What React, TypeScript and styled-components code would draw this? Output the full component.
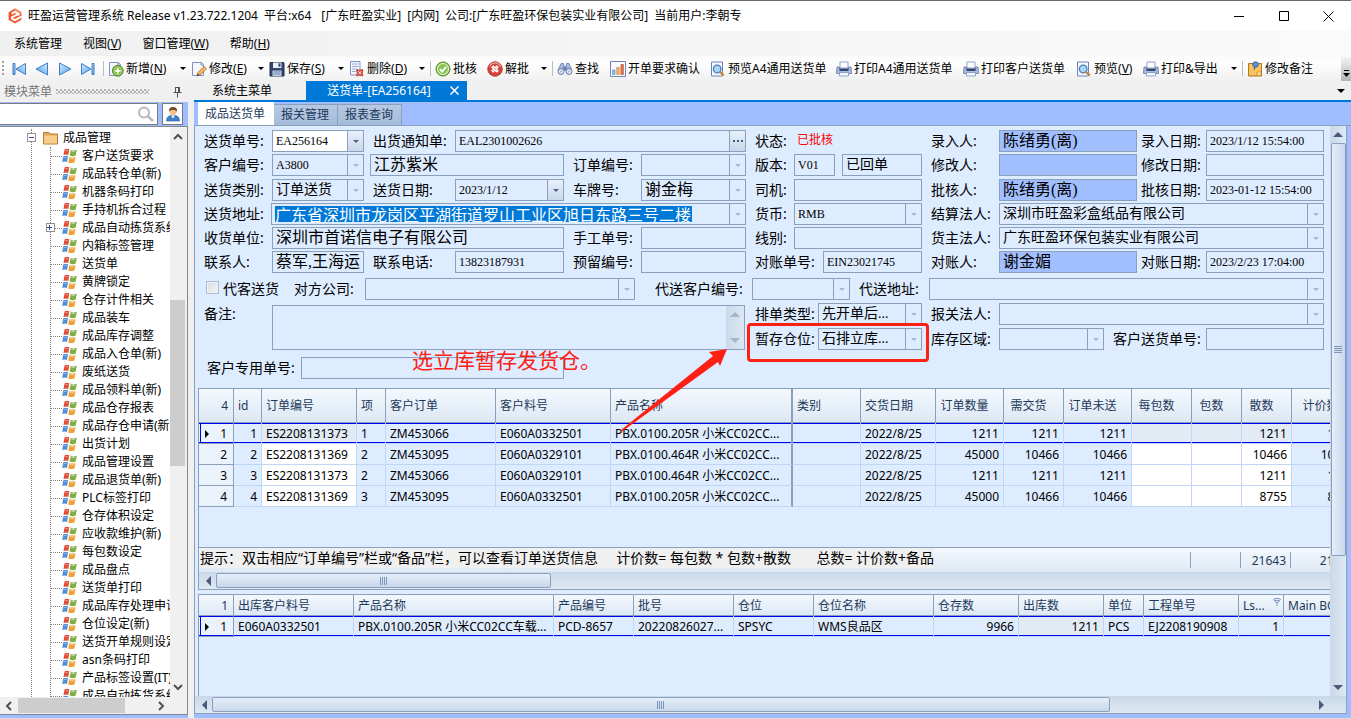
import React from "react";
import styled, { createGlobalStyle, css } from "styled-components";

const UI = `"Noto Sans", "Noto Sans CJK SC", sans-serif`;
const SERIF = `"Liberation Serif", "Noto Sans CJK SC", serif`;
const C = {
  accent: "#0078d7",
  frame: "#a0bdff",
  panel: "#deecff",
  line: "#8ba0bc",
  grid: "#c0d6f5",
  head: "#1e395b",
};

const Global = createGlobalStyle`
  * { box-sizing: border-box; }
  html, body, #root { height: 100%; }
  body { margin: 0; font: 12px/18px ${UI}; color: #000; background: #f0f0f0; overflow: hidden; }
  button, input, select, textarea { font: inherit; color: inherit; margin: 0; border-radius: 0; }
  button { background: none; border: 0; padding: 0; }
  ul { list-style: none; margin: 0; padding: 0; }
  svg { display: block; flex: none; }
`;

/* ---------- window chrome ---------- */

const Window = styled.div`
  display: flex;
  flex-direction: column;
  height: 100vh;
  border-bottom: 1px solid #dcdcdc;
`;

const TitleBar = styled.header`
  display: flex;
  align-items: center;
  flex: none;
  height: 31px;
  padding-left: 7px;
  background: #fff;
  border-top: 1px solid #6a6868;
`;

const TitleText = styled.h1`
  display: flex;
  gap: 6px;
  flex: 1;
  margin: 0 0 0 5px;
  font-size: 12px;
  font-weight: 400;
  white-space: nowrap;
  span:nth-child(2) { margin-right: 4px; }
`;

const CaptionButton = styled.button`
  display: grid;
  place-items: center;
  width: 45px;
  height: 30px;
`;

const MenuBar = styled.nav`
  display: flex;
  align-items: center;
  flex: none;
  gap: 21px;
  height: 25px;
  padding: 1px 0 0 14px;
  background: linear-gradient(90deg, #f0f0f0, #fafafa);
`;

const ToolBar = styled.div`
  display: flex;
  align-items: center;
  flex: none;
  height: 25px;
  padding-left: 2px;
  overflow: hidden;
  background: linear-gradient(#fafafa, #fefefe 30%, #f0f0f0);
`;

const Grip = styled.span`
  width: 5px;
  height: 16px;
  background: radial-gradient(circle at 1px 1px, #a0a0a0 1px, transparent 1px) 0 0 / 4px 4px repeat-y;
`;

const NavGroup = styled.div`
  display: flex;
  flex: none;
  margin-right: 4px;
`;

const NavButton = styled.button`
  display: grid;
  place-items: center;
  flex: none;
  width: 23px;
  height: 24px;
`;

const ToolSep = styled.span`
  flex: none;
  width: 1px;
  height: 15px;
  margin: 0 4px 0 0;
  background: #bdbdbd;
`;

const ToolButton = styled.button<{ $w: number }>`
  display: flex;
  align-items: center;
  gap: 2px;
  flex: none;
  width: ${(p) => p.$w}px;
  height: 24px;
  white-space: nowrap;
`;

const DropArrow = styled.i`
  width: 0;
  border: 3px solid transparent;
  border-top: 3px solid #000;
  border-bottom: 0;
  margin: 0 5px 0 auto;
`;

const Overflow = styled.button`
  display: flex;
  align-items: flex-end;
  justify-content: center;
  flex: none;
  width: 10px;
  height: 24px;
  margin-left: auto;
  padding-bottom: 3px;
  background: linear-gradient(#f4f4f4, #b4b4b4);
`;

const Body = styled.div`
  display: flex;
  flex: 1;
  min-height: 0;
  gap: 6px;
`;

/* ---------- sidebar ---------- */

const Sidebar = styled.aside`
  display: flex;
  flex-direction: column;
  flex: none;
  width: 188px;
  padding-bottom: 3px;
  background: ${C.frame};
`;

const SideTitle = styled.div`
  display: flex;
  align-items: center;
  height: 21px;
  padding: 0 6px 0 4px;
  color: #777;
  background: #f0f0f0;
`;

const SideDots = styled.span`
  flex: 1;
  height: 5px;
  margin: 0 24px 0 4px;
  background:
    radial-gradient(circle at 1px 1px, #b0b0b0 1px, transparent 1px) 0 0 / 4px 4px,
    radial-gradient(circle at 1px 1px, #b0b0b0 1px, transparent 1px) 2px 2px / 4px 4px;
`;

const SearchRow = styled.div`
  display: flex;
  align-items: center;
  gap: 4px;
  height: 24px;
`;

const SearchBox = styled.label`
  display: flex;
  align-items: center;
  width: 158px;
  height: 22px;
  padding-right: 3px;
  background: #fff;
  border: 1px solid #7a7a7a;
  border-left: 0;
  input { flex: 1; min-width: 0; border: 0; outline: 0; background: none; }
`;

const UserButton = styled.button`
  display: grid;
  place-items: center;
  width: 21px;
  height: 22px;
  background: #fff;
  border: 1px solid #7a7a7a;
`;

const TreeBox = styled.div`
  display: flex;
  flex-direction: column;
  flex: 1;
  min-height: 0;
  background: #fff;
  border: 1px solid #828790;
  border-left: 0;
`;

const TreeArea = styled.div`
  display: flex;
  flex: 1;
  min-height: 0;
`;

const Tree = styled.ul`
  flex: 1;
  min-width: 0;
  overflow: hidden;
  padding-top: 2px;
  white-space: nowrap;
`;

const TreeRoot = styled.li`
  position: relative;
  margin-left: 31px;
  border-left: 1px dotted #808080;
`;

const RootLabel = styled.div`
  display: flex;
  align-items: center;
  height: 18px;
  gap: 4px;
  padding-left: 11px;
`;

const Branch = styled.ul`
  margin-left: 18px;
  border-left: 1px dotted #808080;
`;

const Leaf = styled.li`
  position: relative;
  display: flex;
  align-items: center;
  height: 18px;
  &::before { content: ""; flex: none; width: 11px; border-top: 1px dotted #808080; }
  svg { margin-right: 4px; }
`;

const Expander = styled.button`
  position: absolute;
  top: 4px;
  left: -5px;
  display: grid;
  place-items: center;
  width: 9px;
  height: 9px;
  background: #fff;
  border: 1px solid #919191;
`;

const WinScrollV = styled.div`
  display: flex;
  flex-direction: column;
  justify-content: space-between;
  align-items: center;
  flex: none;
  width: 17px;
  padding: 5px 2px 5px 0;
  background: #f0f0f0;
`;

const WinThumbV = styled.div`
  width: 15px;
  height: 166px;
  margin-top: 158px;
  margin-bottom: auto;
  background: #cdcdcd;
`;

const WinScrollH = styled.div`
  display: flex;
  align-items: center;
  justify-content: space-between;
  flex: none;
  height: 17px;
  padding: 0 21px 0 4px;
  background: #f0f0f0;
`;

const WinThumbH = styled.div`
  width: 107px;
  height: 15px;
  margin: 0 auto 0 4px;
  background: #cdcdcd;
`;

/* ---------- document area ---------- */

const Main = styled.main`
  display: flex;
  flex-direction: column;
  flex: 1;
  min-width: 0;
`;

const DocTabs = styled.div`
  display: flex;
  flex: none;
  height: 21px;
  padding-right: 6px;
  border-bottom: 2px solid ${C.accent};
`;

const DocTab = styled.button<{ $active?: boolean; $w: number }>`
  display: flex;
  align-items: center;
  justify-content: center;
  gap: 19px;
  width: ${(p) => p.$w}px;
  padding-right: ${(p) => (p.$active ? 0 : 16)}px;
  ${(p) => p.$active && css`padding-left: 13px; color: #fff; background: ${C.accent};`}
`;

const TabMenuButton = styled.button`
  display: grid;
  place-items: center;
  margin-left: auto;
`;

const PageTabs = styled.div`
  display: flex;
  align-items: flex-end;
  flex: none;
  height: 24px;
  padding-left: 4px;
  background: ${C.frame};
  border-bottom: 1px solid ${C.line};
`;

const PageTab = styled.button<{ $active?: boolean }>`
  height: 21px;
  padding: 0 8px 0 7px;
  color: ${C.head};
  background: linear-gradient(#b7c9e2, #a3bad9);
  border: 1px solid ${C.line};
  border-width: 1px 1px 0 0;
  ${(p) => p.$active && css`height: 23px; background: #fff; border-color: #fff;`}
`;

const Frame = styled.div`
  display: flex;
  flex-direction: column;
  flex: 1;
  min-height: 0;
  padding: 0 4px 4px 0;
  background: ${C.frame};
`;

const Page = styled.div`
  display: flex;
  flex-direction: column;
  flex: 1;
  min-height: 0;
  background: ${C.panel};
  border: 1px solid ${C.line};
  border-top: 0;
`;

const PageRow = styled.div`
  display: flex;
  flex: 1;
  min-height: 0;
`;

const Content = styled.div`
  display: flex;
  flex-direction: column;
  flex: 1;
  min-width: 0;
`;

const ScrollV = styled.div`
  display: flex;
  flex-direction: column;
  align-items: center;
  justify-content: space-between;
  flex: none;
  width: 16px;
  padding: 6px 0;
  background: linear-gradient(90deg, #c9d9e9, #dfe8f3);
`;

const ThumbV = styled.div`
  display: grid;
  place-items: center;
  width: 15px;
  height: 413px;
  margin: 6px 0 auto;
  background: linear-gradient(90deg, #e5eefa, #c8d7ea);
  border: 1px solid ${C.line};
  border-radius: 2px;
`;

const ScrollH = styled.div`
  display: flex;
  align-items: center;
  flex: none;
  height: 17px;
  padding-left: 7px;
  background: linear-gradient(#c9d9e9, #dfe8f3);
`;

const PageScroll = styled(ScrollH)`
  padding-right: 22px;
`;

const ThumbH = styled.div<{ $w: string }>`
  display: grid;
  place-items: center;
  width: ${(p) => p.$w};
  height: 15px;
  margin: 0 auto 0 5px;
  background: linear-gradient(#e5eefa, #c8d7ea);
  border: 1px solid ${C.line};
  border-radius: 2px;
`;

const Arrow = styled.i<{ $dir: "up" | "down" | "left" | "right"; $c?: string; $s?: number }>`
  flex: none;
  width: 0;
  height: 0;
  border: ${(p) => p.$s ?? 5}px solid transparent;
  ${(p) => p.$dir === "up" && css`border-top: 0; border-bottom-color: ${p.$c ?? "#4a5b7d"};`}
  ${(p) => p.$dir === "down" && css`border-bottom: 0; border-top-color: ${p.$c ?? "#4a5b7d"};`}
  ${(p) => p.$dir === "left" && css`border-left: 0; border-right-color: ${p.$c ?? "#4a5b7d"};`}
  ${(p) => p.$dir === "right" && css`border-right: 0; border-left-color: ${p.$c ?? "#4a5b7d"};`}
`;

/* ---------- form ---------- */

const Form = styled.form`
  position: relative;
  flex: none;
  padding: 4px 6px 9px 0;
`;

const Group = styled.div<{ $top?: number }>`
  display: flex;
  flex-direction: column;
  gap: 2px;
  margin-top: ${(p) => p.$top ?? 0}px;
`;

const Row = styled.div`
  display: flex;
  align-items: flex-start;
`;

const Label = styled.label<{ $w: number; $pad?: number }>`
  flex: none;
  width: ${(p) => p.$w}px;
  padding-left: ${(p) => p.$pad ?? 9}px;
  font-size: 14px;
  line-height: 22px;
  white-space: nowrap;
`;

type Face = "serif" | "wide" | "cjk";
const faces = {
  serif: css`font: 12px/20px ${SERIF};`,
  wide: css`font: 16px/20px ${SERIF};`,
  cjk: css`font: 14px/20px ${SERIF};`,
};

const Box = styled.div<{ $w?: number; $blue?: boolean; $white?: boolean; $gap?: number; $face: Face }>`
  display: flex;
  align-items: center;
  ${(p) => (p.$w ? css`flex: none; width: ${p.$w}px;` : css`flex: 1; min-width: 0;`)}
  height: 22px;
  margin-left: ${(p) => p.$gap ?? 0}px;
  background: ${(p) => (p.$blue ? "#a1beff" : p.$white ? "#fff" : "transparent")};
  border: 1px solid ${C.line};
  input, select {
    flex: 1;
    min-width: 0;
    height: 20px;
    padding: 0 3px;
    border: 0;
    outline: 0;
    appearance: none;
    background: none;
    ${(p) => faces[p.$face]}
  }
`;

const BoxButton = styled.button<{ $on?: boolean }>`
  display: grid;
  place-items: center;
  flex: none;
  width: 16px;
  height: 20px;
  margin-left: auto;
  border-left: 1px solid ${C.line};
  background: ${(p) => (p.$on ? "linear-gradient(#e8f0fa, #c8d8ea)" : "transparent")};
`;

const SelectedText = styled.input`
  && {
    flex: none;
    width: 417px;
    height: 16px;
    margin-left: 3px;
    padding: 0;
    line-height: 16px;
    color: #fff;
    background: ${C.accent};
  }
`;

const Status = styled.output`
  flex: none;
  width: 128px;
  padding-left: 3px;
  line-height: 20px;
  color: #f00;
`;

const CheckLabel = styled.label`
  display: flex;
  align-items: center;
  gap: 4px;
  flex: none;
  width: 90px;
  height: 22px;
  padding-left: 11px;
  font-size: 14px;
  white-space: nowrap;
  input {
    flex: none;
    appearance: none;
    width: 13px;
    height: 13px;
    margin-bottom: 4px;
    background: linear-gradient(135deg, #d9dde3, #f4f4f2);
    border: 1px solid #a9bdd8;
    box-shadow: inset 0 0 0 1px #eef3fa;
  }
`;

const NoteBox = styled.div`
  display: flex;
  flex: none;
  width: 473px;
  height: 45px;
  margin: 2px 1px 0 0;
  border: 1px solid ${C.line};
  textarea {
    flex: 1;
    resize: none;
    border: 0;
    outline: 0;
    background: none;
  }
`;

const NoteScroll = styled.div`
  display: flex;
  flex-direction: column;
  align-items: center;
  justify-content: space-between;
  width: 18px;
  padding: 6px 0;
  background: linear-gradient(90deg, #cbdaea, #dce7f3);
`;

const NoteRow = styled.div`
  display: flex;
  margin-top: 3px;
`;

const NoteSide = styled.div`
  display: flex;
  flex-direction: column;
  gap: 3px;
  flex: 1;
  min-width: 0;
`;

const CustomerRow = styled(Row)`
  margin-top: 7px;
  padding-left: 3px;
`;

const Callout = styled.div`
  position: absolute;
  left: 552px;
  top: 197px;
  width: 182px;
  height: 39px;
  border: 3px solid #fe2015;
  border-radius: 4px;
  pointer-events: none;
`;

const CalloutText = styled.p`
  position: absolute;
  left: 217px;
  top: 220px;
  margin: 0;
  font: 21px/26px "Noto Sans CJK SC", sans-serif;
  color: #fe2015;
  white-space: nowrap;
  pointer-events: none;
`;

const CalloutArrow = styled.svg`
  position: absolute;
  z-index: 1;
  left: 425px;
  top: 222px;
  pointer-events: none;
`;

/* ---------- grids ---------- */

const GridPane = styled.section<{ $fill?: boolean }>`
  display: flex;
  flex-direction: column;
  ${(p) => (p.$fill ? css`flex: 1; min-height: 0; margin-top: 4px;` : css`flex: none; border-bottom: 1px solid ${C.line};`)}
  margin-left: 3px;
  border-top: 1px solid ${C.line};
  border-left: 1px solid ${C.line};
  overflow: hidden;
`;

const TableArea = styled.div`
  min-height: 158px;
`;

const Table = styled.table<{ $headH: number }>`
  table-layout: fixed;
  width: 1px;
  border-collapse: separate;
  border-spacing: 0;
  font-size: 12px;
  line-height: 18px;
  th {
    height: ${(p) => p.$headH}px;
    padding: 1px 4px 0;
    font-weight: 400;
    text-align: left;
    white-space: nowrap;
    color: ${C.head};
    background: linear-gradient(#f3f8fd, #dde8f4);
    border-right: 1px solid ${C.line};
    border-bottom: 1px solid ${C.line};
  }
`;

const HeadCell = styled.th<{ $center?: boolean; $right?: boolean; $thick?: boolean }>`
  ${(p) => p.$center && css`&& { padding-right: 14px; text-align: center; }`}
  ${(p) => p.$right && css`&& { padding-right: 5px; text-align: right; }`}
  ${(p) => p.$thick && css`&& { border-right-width: 2px; }`}
`;

const Cell = styled.td<{ $num?: boolean; $bg?: string; $thick?: boolean; $current?: boolean }>`
  height: 21px;
  padding: 2px 4px 0;
  overflow: hidden;
  white-space: nowrap;
  text-align: ${(p) => (p.$num ? "right" : "left")};
  background: ${(p) => p.$bg ?? "transparent"};
  border-right: ${(p) => (p.$thick ? `2px solid ${C.line}` : `1px solid ${C.grid}`)};
  border-bottom: 1px solid ${C.grid};
  ${(p) => p.$current && css`box-shadow: inset 0 1px #0000f0, inset 0 -1px #0000f0;`}
`;

const Indicator = styled.td<{ $current?: boolean }>`
  height: 21px;
  padding: 2px 6px 0 0;
  text-align: right;
  background: #eaf2fb;
  border-right: 1px solid ${C.line};
  border-bottom: 1px solid ${C.line};
  ${(p) => p.$current && css`
    background: linear-gradient(#0000f0, #0000f0) 1px 0 / 1px 100% no-repeat, #eaf2fb;
    box-shadow: inset 0 1px #0000f0, inset 0 -1px #0000f0;
  `}
  div { display: flex; align-items: center; justify-content: flex-end; }
  i { margin: 0 auto 0 6px; border-left-color: #000; }
`;

const Summary = styled.div`
  display: flex;
  flex: none;
  height: 25px;
  border-top: 1px solid ${C.line};
  background: linear-gradient(#f3f8fd, #dfe9f5);
  color: ${C.head};
`;

const Hint = styled.div`
  flex: none;
  width: 991px;
  padding-left: 1px;
  span {
    display: inline-block;
    font-size: 14px;
    line-height: 20px;
    white-space: pre;
    color: #000;
    background: #f0f0f0;
  }
`;

const Sum = styled.div<{ $w: number }>`
  flex: none;
  width: ${(p) => p.$w}px;
  height: 16px;
  margin-top: 4px;
  padding-right: 4px;
  line-height: 18px;
  text-align: right;
  border-left: 1px solid ${C.line};
`;

const FilterHead = styled.span`
  display: flex;
  justify-content: space-between;
  align-items: center;
  svg { margin: -8px -2px 0 0; }
`;

/* ---------- icons ---------- */

const I = ({ children, s = 16 }: { children: React.ReactNode; s?: number }) => (
  <svg width={s} height={s} viewBox="0 0 16 16" aria-hidden="true">{children}</svg>
);

const Logo = () => (
  <I>
    <path d="M8 .6 14.4 4.2V11.8L8 15.4 1.6 11.8V4.2Z" fill="#f2552c" />
    <path d="M14.4 4.2 8 .6 6 1.7l5.4 3.1z" fill="#ff8a5c" />
    <path d="M4.6 5.6 8 3.8l3.6 2L5 9.4v1.2l3 1.6 6.400-3.500" fill="none" stroke="#fff" strokeWidth="1.9" />
    <path d="M11.6 5.800v2" stroke="#fff" strokeWidth="1.4" />
  </I>
);

const Nav = ({ flip, bar }: { flip?: boolean; bar?: boolean }) => (
  <svg width="16" height="16" viewBox="0 0 16 16" aria-hidden="true">
    <defs>
      <linearGradient id="navfill" x1="0" y1="0" x2="1" y2="1">
        <stop offset="0" stopColor="#d5ecff" />
        <stop offset="1" stopColor="#4f9be6" />
      </linearGradient>
    </defs>
    <g transform={flip ? "matrix(-1 0 0 1 16 0)" : undefined} fill="url(#navfill)" stroke="#3d7fc6" strokeWidth="1">
      <path d={bar ? "M1.5 2.5v11l9.5-5.500z" : "M2.500 2v12L14 8z"} />
      {bar && <path d="M12 2.500h2v11h-2z" />}
    </g>
  </svg>
);

const Sheet = () => (
  <>
    <path d="M1.500 1.500h9l2 2v11h-11z" fill="#f4f8fe" stroke="#7f93c0" />
    <path d="M10 1.500V4h2.500" fill="none" stroke="#7f93c0" />
  </>
);

const AddIcon = () => (
  <I>
    <Sheet />
    <circle cx="9.800" cy="9.800" r="5.400" fill="#79b23c" stroke="#4f8a22" />
    <circle cx="9.800" cy="9.800" r="4" fill="none" stroke="#c3e39b" strokeWidth=".8" />
    <path d="M9.800 7v5.600M7 9.800h5.600" stroke="#fff" strokeWidth="1.800" />
  </I>
);
const EditIcon = () => (
  <I>
    <Sheet />
    <path d="m6 15 1-3.600 6-6 2.500 2.400-6 6z" fill="#f4b860" stroke="#a8672a" strokeWidth=".8" />
    <path d="m6 15 .7-2.600 2 1.900z" fill="#444" />
  </I>
);
const SaveIcon = () => (
  <I>
    <path d="M1 1.500h13.500l.5.500v13H1z" fill="#33456b" stroke="#1f2d4b" />
    <path d="M4 1.500h8.500V7H4z" fill="#e9f0fa" />
    <path d="M9.500 2.300h2v3.400h-2z" fill="#33456b" />
    <path d="M3.500 9.500h9V15h-9z" fill="#c3d2ea" />
    <path d="M4.500 11h7M4.500 13h7" stroke="#6c82ae" />
  </I>
);
const DeleteIcon = () => (
  <I>
    <path d="M1.500.5h9.500v13.500H1.500z" fill="#f4f7fd" stroke="#7f93c8" />
    <path d="M3 3h6.500M3 5.500h6.500M3 8h5M3 10.500h4" stroke="#93a6d8" />
    <path d="M7.500 8.500h6.500v6.500H7.500z" fill="#e0685c" />
    <path d="m7.800 8.800 6 6m0-6-6 6" stroke="#c8352b" strokeWidth="2" />
    <path d="m9 10 3.600 3.600m0-3.600L9 13.600" stroke="#fff" strokeWidth=".9" />
  </I>
);
const ApproveIcon = () => (
  <I>
    <circle cx="8" cy="8" r="7" fill="#6fb536" stroke="#5a8f35" />
    <circle cx="8" cy="8" r="5.500" fill="#86c44e" stroke="#e3f2d0" strokeWidth="1.200" />
    <path d="m5 8.200 2.200 2.400 3.800-4.800" fill="none" stroke="#fff" strokeWidth="1.900" />
  </I>
);
const RejectIcon = () => (
  <I>
    <circle cx="8" cy="8" r="7.200" fill="#d6453d" stroke="#b33029" />
    <path d="M2.500 5.500a6 6 0 0 1 11 0" fill="none" stroke="#f0a49a" strokeWidth="1.400" />
    <path d="m5.200 5.200 5.600 5.600m0-5.600-5.600 5.600" stroke="#fff" strokeWidth="3" />
    <path d="m6 6 4 4m0-4-4 4" stroke="#e9b4af" strokeWidth=".9" />
  </I>
);
const FindIcon = () => (
  <I>
    <path d="M4 2.500h2.500l1 7H1zM12 2.500H9.500l-1 7H15z" fill="#a9bcdb" stroke="#5f7aa8" strokeWidth=".8" />
    <path d="M6.500 5.500h3v3h-3z" fill="#5f7aa8" />
    <circle cx="4" cy="10.500" r="3" fill="#e2ebf8" stroke="#5f7aa8" />
    <circle cx="12" cy="10.500" r="3" fill="#e2ebf8" stroke="#5f7aa8" />
    <path d="M2.800 11.500 5 9.500M10.800 11.500l2.200-2" stroke="#5f7aa8" strokeWidth=".8" />
  </I>
);
const ChartIcon = () => (
  <I>
    <path d="M.5.500h15v15H.5z" fill="#f8fbff" stroke="#6f86b4" />
    <path d="M2.500 9h2.500v4.500H2.500z" fill="#8dbdf0" stroke="#4f86c6" strokeWidth=".6" />
    <path d="M6.700 6.500h2.500v7H6.700z" fill="#f7b563" stroke="#cf7f28" strokeWidth=".6" />
    <path d="M10.900 3.500h2.500v10h-2.500z" fill="#e27a55" stroke="#b94627" strokeWidth=".6" />
  </I>
);
const PreviewIcon = () => (
  <I>
    <path d="M1.500 1h11v14h-11z" fill="#f6f9ff" stroke="#6b83b8" />
    <circle cx="7.200" cy="8" r="3.800" fill="#a9d5f6" stroke="#4c7db8" strokeWidth="1.300" />
    <path d="m10 11 3.800 3.500" stroke="#c6803a" strokeWidth="2.200" />
  </I>
);
const PrintIcon = () => (
  <I>
    <path d="M4 1h8v6H4z" fill="#fff" stroke="#8fa2cb" />
    <path d="M1 6h2.500v2.500h9V6H15l.5 6.500H.5z" fill="#a9bbde" stroke="#6277a8" strokeWidth=".8" />
    <path d="M3.500 7.500h9v2.500h-9z" fill="#34456f" />
    <path d="M3.500 11.500h9V15h-9z" fill="#f3f7ff" stroke="#7d92c2" strokeWidth=".8" />
  </I>
);
const NoteIcon = () => (
  <I>
    <path d="M1.500 2.500h13v12.500h-13z" fill="#f9c45e" stroke="#b8741c" />
    <path d="M10 15v-4h4.500" fill="#fde6b0" stroke="#b8741c" strokeWidth=".7" />
    <circle cx="8.500" cy="3.500" r="2.800" fill="#5b8fd6" stroke="#2f5a9a" strokeWidth=".8" />
    <path d="m8 6-1 3" stroke="#2f5a9a" />
  </I>
);
const ModuleIcon = () => (
  <I>
    <path d="M2.600 1.200Q4.800.2 7.300 1.300L6.300 7.100Q4 6.100 1.500 7.100z" fill="#df4f37" />
    <path d="M8.700 1.900Q11.500 3 14.900 1.800L13.700 7.600Q10.800 8.700 7.600 7.600z" fill="#7fae45" />
    <path d="M1.300 8.300Q3.700 7.300 6.100 8.300L5 14Q2.700 13 .2 14z" fill="#4f8fd8" />
    <path d="M7.400 8.900Q10.300 10 13.500 8.900L12.400 14.500Q9.400 15.600 6.300 14.400z" fill="#f0a136" />
    <path d="M3.600 2.500 6 2.800M9.500 3.600l3.500-.1M2.400 9.500l2.400.2M8.300 10.500l3.600-.1" stroke="#fff" strokeOpacity=".45" />
  </I>
);
const FolderIcon = () => (
  <I>
    <path d="M.5 2.500h5.500l1.500 1.500h7v10H.5z" fill="#e2a85a" stroke="#b87b34" />
    <path d="M1 5.500h13v8H1z" fill="#f6cd8a" />
  </I>
);
const UserIcon = () => (
  <I>
    <path d="M1.500 15q0-5 4.500-5.500h4q4.500.5 4.500 5.500z" fill="#3f7fca" stroke="#2a5c9d" strokeWidth=".6" />
    <path d="m6 9.500 2 3 2-3z" fill="#fff" />
    <circle cx="8" cy="5.500" r="3.600" fill="#f3c08c" />
    <path d="M4 5.500Q3.500 1 8 1t4 4.500Q10.500 3.500 8 4 5.500 3.500 4 5.500" fill="#7a4a22" />
  </I>
);
const Magnifier = () => (
  <svg width="17" height="17" viewBox="0 0 17 17" fill="none" stroke="#b9b9b9" aria-hidden="true">
    <circle cx="7" cy="6.500" r="5" strokeWidth="2" />
    <path d="m10.500 10 5.500 5" strokeWidth="2.600" />
  </svg>
);
const Pin = () => (
  <svg width="9" height="12" viewBox="0 0 9 12" fill="none" stroke="#555" aria-hidden="true">
    <path d="M2.500 1v5.500M2.500 1.500h4M5.500 1v5.500M6.500 1v5.500M.5 6.500h8M4.500 7v4.500" />
  </svg>
);
const Chevron = ({ d }: { d: string }) => (
  <svg width="10" height="10" viewBox="0 0 10 10" fill="none" stroke="#505050" strokeWidth="2" aria-hidden="true">
    <path d={d} />
  </svg>
);
const Ridges = ({ vertical }: { vertical?: boolean }) => (
  <svg width="8" height="8" viewBox="0 0 8 8" stroke="#7d97ba" aria-hidden="true">
    <path d={vertical ? "M0 .5h8M0 2.500h8M0 4.500h8M0 6.500h8" : "M.5 0v8M2.500 0v8M4.500 0v8M6.500 0v8"} />
  </svg>
);

/* ---------- form pieces ---------- */

type FieldProps = {
  id: string;
  label?: string;
  lw?: number;
  pad?: number;
  w?: number;
  value?: string;
  face?: Face;
  blue?: boolean;
  white?: boolean;
  gap?: number;
};

const Text = ({ id, label, lw = 77, pad, w, value = "", face = "serif", blue, gap, more }: FieldProps & { more?: boolean }) => (
  <>
    {label && <Label htmlFor={id} $w={lw} $pad={pad}>{label}:</Label>}
    <Box $w={w} $blue={blue} $gap={gap} $face={face}>
      <input id={id} aria-label={label ? undefined : id} defaultValue={value} />
      {more && (
        <BoxButton type="button" $on aria-label="更多">
          <svg width="10" height="2" fill="#4a5b7d"><path d="M0 0h2v2H0zM4 0h2v2H4zM8 0h2v2H8z" /></svg>
        </BoxButton>
      )}
    </Box>
  </>
);

const Combo = ({ id, label, lw = 77, pad, w, value = "", face = "serif", white, on }: FieldProps & { on?: boolean }) => (
  <>
    <Label htmlFor={id} $w={lw} $pad={pad}>{label}:</Label>
    <Box $w={w} $white={white} $face={face}>
      <select id={id}><option>{value}</option></select>
      <BoxButton type="button" $on={on} aria-label="展开">
        <Arrow $dir="down" $s={3} $c={on ? "#4a617f" : "#a5b8d2"} />
      </BoxButton>
    </Box>
  </>
);

const OrderForm = () => (
  <Form>
    <Group>
      <Row>
        <Combo id="no" label="送货单号" w={92} value="EA256164" white on />
        <Text id="notice" label="出货通知单" lw={91} w={291} value="EAL2301002626" more />
        <Label as="span" $w={48}>状态:</Label>
        <Status>已批核</Status>
        <Text id="creator" label="录入人" w={138} value="陈绪勇(离)" face="wide" blue />
        <Text id="created" label="录入日期" lw={69} pad={4} value="2023/1/12 15:54:00" />
      </Row>
      <Row>
        <Combo id="cust" label="客户编号" w={92} value="A3800" />
        <Text id="客户名称" gap={6} w={194} value="江苏紫米" face="wide" />
        <Combo id="order" label="订单编号" w={105} />
        <Text id="ver" label="版本" lw={48} w={41} value="V01" />
        <Text id="回单状态" gap={7} w={80} value="已回单" face="cjk" />
        <Text id="editor" label="修改人" w={138} blue />
        <Text id="edited" label="修改日期" lw={69} pad={4} />
      </Row>
    </Group>
    <Group $top={3}>
      <Row>
        <Combo id="kind" label="送货类别" w={92} value="订单送货" face="cjk" />
        <Combo id="date" label="送货日期" lw={91} w={109} value="2023/1/12" on />
        <Combo id="plate" label="车牌号" w={105} value="谢金梅" face="wide" />
        <Text id="driver" label="司机" lw={48} w={128} />
        <Text id="approver" label="批核人" w={138} value="陈绪勇(离)" face="wide" blue />
        <Text id="approved" label="批核日期" lw={69} pad={4} value="2023-01-12 15:54:00" />
      </Row>
      <Row>
        <Label htmlFor="addr" $w={76}>送货地址:</Label>
        <Box $w={475} $face="wide">
          <SelectedText id="addr" defaultValue="广东省深圳市龙岗区平湖街道罗山工业区旭日东路三号二楼" />
          <BoxButton type="button" aria-label="展开"><Arrow $dir="down" $s={3} $c="#a5b8d2" /></BoxButton>
        </Box>
        <Combo id="currency" label="货币" lw={48} w={128} value="RMB" />
        <Combo id="settle" label="结算法人" value="深圳市旺盈彩盒纸品有限公司" face="cjk" />
      </Row>
      <Row>
        <Text id="receiver" label="收货单位" w={292} value="深圳市首诺信电子有限公司" face="wide" />
        <Text id="manual" label="手工单号" w={105} />
        <Text id="lineType" label="线别" lw={48} w={128} />
        <Combo id="owner" label="货主法人" value="广东旺盈环保包装实业有限公司" face="cjk" />
      </Row>
      <Row>
        <Text id="contact" label="联系人" w={92} value="蔡军,王海运" face="wide" />
        <Text id="phone" label="联系电话" lw={91} w={109} value="13823187931" />
        <Text id="reserve" label="预留编号" w={105} />
        <Text id="bill" label="对账单号" w={99} value="EIN23021745" />
        <Text id="checker" label="对账人" w={138} value="谢金媚" face="wide" blue />
        <Text id="checked" label="对账日期" lw={69} pad={4} value="2023/2/23 17:04:00" />
      </Row>
    </Group>
    <Group $top={5}>
      <Row>
        <CheckLabel><input type="checkbox" />代客送货</CheckLabel>
        <Combo id="partner" label="对方公司" lw={80} w={270} />
        <Combo id="agentCust" label="代送客户编号" lw={117} pad={20} w={98} />
        <Combo id="agentAddr" label="代送地址" lw={79} />
      </Row>
    </Group>
    <NoteRow>
      <Label htmlFor="memo" $w={77}>备注:</Label>
      <NoteBox>
        <textarea id="memo" />
        <NoteScroll>
          <Arrow $dir="up" $c="#a5b4cb" />
          <Arrow $dir="down" $c="#a5b4cb" />
        </NoteScroll>
      </NoteBox>
      <NoteSide>
        <Row>
          <Combo id="sched" label="排单类型" lw={72} w={104} value="先开单后..." face="cjk" />
          <Combo id="customs" label="报关法人" />
        </Row>
        <Row>
          <Combo id="bin" label="暂存仓位" lw={72} w={104} value="石排立库..." face="cjk" />
          <Combo id="area" label="库存区域" w={105} />
          <Text id="custNo" label="客户送货单号" lw={102} />
        </Row>
      </NoteSide>
    </NoteRow>
    <CustomerRow>
      <Text id="special" label="客户专用单号" lw={103} w={263} />
    </CustomerRow>
    <Callout />
    <CalloutText>选立库暂存发货仓。</CalloutText>
    <CalloutArrow width="110" height="86" viewBox="0 0 110 86" aria-hidden="true">
      <path d="M107 1 89 4l4 4L1 82l1 1.500L98 14l2 4z" fill="#fe2015" />
    </CalloutArrow>
  </Form>
);

/* ---------- grid data ---------- */

type Col = { t: React.ReactNode; w: number; num?: boolean; center?: boolean; edit?: boolean; thick?: boolean };

const orderCols: Col[] = [
  { t: "id", w: 28, num: true },
  { t: "订单编号", w: 95, edit: true },
  { t: "项", w: 29 },
  { t: "客户订单", w: 110 },
  { t: "客户料号", w: 115 },
  { t: "产品名称", w: 182, thick: true },
  { t: "类别", w: 68 },
  { t: "交货日期", w: 75 },
  { t: "订单数量", w: 68, num: true, center: true },
  { t: "需交货", w: 60, num: true, center: true },
  { t: "订单未送", w: 68, num: true, center: true },
  { t: "每包数", w: 60, num: true, edit: true, center: true },
  { t: "包数", w: 50, num: true, edit: true, center: true },
  { t: "散数", w: 50, num: true, edit: true, center: true },
  { t: "计价数", w: 68, num: true, center: true },
];

const orderRows = [
  ["1", "ES2208131373", "1", "ZM453066", "E060A0332501", "PBX.0100.205R 小米CC02CC...", "", "2022/8/25", "1211", "1211", "1211", "", "", "1211", "1211"],
  ["2", "ES2208131369", "2", "ZM453095", "E060A0329101", "PBX.0100.464R 小米CC02CC...", "", "2022/8/25", "45000", "10466", "10466", "", "", "10466", "10466"],
  ["3", "ES2208131373", "2", "ZM453066", "E060A0329101", "PBX.0100.464R 小米CC02CC...", "", "2022/8/25", "1211", "1211", "1211", "", "", "1211", "1211"],
  ["4", "ES2208131369", "3", "ZM453095", "E060A0332501", "PBX.0100.205R 小米CC02CC...", "", "2022/8/25", "45000", "10466", "10466", "", "", "8755", "8755"],
];

const stockCols: Col[] = [
  { t: "出库客户料号", w: 120 },
  { t: "产品名称", w: 200 },
  { t: "产品编号", w: 80 },
  { t: "批号", w: 100 },
  { t: "仓位", w: 80 },
  { t: "仓位名称", w: 120 },
  { t: "仓存数", w: 85, num: true },
  { t: "出库数", w: 85, num: true, edit: true },
  { t: "单位", w: 40 },
  { t: "工程单号", w: 95 },
  {
    t: (
      <FilterHead>
        Ls...
        <svg width="8" height="8" viewBox="0 0 8 8" fill="none" stroke="#7d97ba">
          <ellipse cx="4" cy="1.500" rx="3.500" ry="1" />
          <path d="M1 2.500 4 5l3-2.500M4 4v4" />
        </svg>
      </FilterHead>
    ),
    w: 45,
    num: true,
  },
  { t: "Main BOM", w: 90 },
];

const stockRows = [
  ["E060A0332501", "PBX.0100.205R 小米CC02CC车载...", "PCD-8657", "20220826027...", "SPSYC", "WMS良品区", "9966", "1211", "PCS", "EJ2208190908", "1", ""],
];

const DataGrid = ({ cols, rows, headH, label }: { cols: Col[]; rows: string[][]; headH: number; label: string }) => (
  <Table $headH={headH} aria-label={label}>
    <colgroup>
      <col width={35} />
      {cols.map((c, i) => <col key={i} width={c.w} />)}
    </colgroup>
    <thead>
      <tr>
        <HeadCell $right>{rows.length}</HeadCell>
        {cols.map((c, i) => (
          <HeadCell key={i} $center={c.center} $thick={c.thick}>{c.t}</HeadCell>
        ))}
      </tr>
    </thead>
    <tbody>
      {rows.map((r, ri) => (
        <tr key={ri}>
          <Indicator $current={ri === 0}>
            <div>{ri === 0 && <Arrow $dir="right" $s={4} />}{ri + 1}</div>
          </Indicator>
          {r.map((v, ci) => {
            const c = cols[ci];
            const bg = c.edit ? (ri === 0 ? "#e2ebf4" : "#fff") : undefined;
            return <Cell key={ci} $num={c.num} $bg={bg} $thick={c.thick} $current={ri === 0}>{v}</Cell>;
          })}
        </tr>
      ))}
    </tbody>
  </Table>
);

/* ---------- menus ---------- */

const leaves = [
  "客户送货要求", "成品转仓单(新)", "机器条码打印", "手持机拆合过程", "成品自动拣货系统", "内箱标签管理", "送货单",
  "黄牌锁定", "仓存计件相关", "成品装车", "成品库存调整", "成品入仓单(新)", "废纸送货", "成品领料单(新)", "成品仓存报表",
  "成品存仓申请(新)", "出货计划", "成品管理设置", "成品退货单(新)", "PLC标签打印", "仓存体积设定", "应收款维护(新)",
  "每包数设定", "成品盘点", "送货单打印", "成品库存处理申请", "仓位设定(新)", "送货开单规则设定", "asn条码打印",
  "产品标签设置(IT)", "成品自动拣货系统",
];

type Tool = { icon: React.ReactNode; text: string; key?: string; w: number; drop?: boolean; sep?: boolean };
const tools: Tool[] = [
  { icon: <AddIcon />, text: "新增", key: "N", w: 83, drop: true, sep: true },
  { icon: <EditIcon />, text: "修改", key: "E", w: 78, drop: true },
  { icon: <SaveIcon />, text: "保存", key: "S", w: 80, drop: true },
  { icon: <DeleteIcon />, text: "删除", key: "D", w: 81, drop: true },
  { icon: <ApproveIcon />, text: "批核", w: 52, sep: true },
  { icon: <RejectIcon />, text: "解批", w: 65, drop: true },
  { icon: <FindIcon />, text: "查找", w: 53, sep: true },
  { icon: <ChartIcon />, text: "开单要求确认", w: 100 },
  { icon: <PreviewIcon />, text: "预览A4通用送货单", w: 126 },
  { icon: <PrintIcon />, text: "打印A4通用送货单", w: 127 },
  { icon: <PrintIcon />, text: "打印客户送货单", w: 113 },
  { icon: <PreviewIcon />, text: "预览", key: "V", w: 67 },
  { icon: <PrintIcon />, text: "打印&导出", w: 99, drop: true },
  { icon: <NoteIcon />, text: "修改备注", w: 70, sep: true },
];

export default function App() {
  return (
    <Window>
      <Global />
      <TitleBar>
        <Logo />
        <TitleText>
          <span>旺盈运营管理系统 Release v1.23.722.1204</span>
          <span>平台:x64</span>
          <span>[广东旺盈实业]</span>
          <span>[内网]</span>
          <span>公司:[广东旺盈环保包装实业有限公司]</span>
          <span>当前用户:李朝专</span>
        </TitleText>
        <CaptionButton aria-label="最小化"><svg width="10" height="10" stroke="#000"><path d="M0 5.500h10" /></svg></CaptionButton>
        <CaptionButton aria-label="最大化"><svg width="10" height="10" stroke="#000" fill="none"><path d="M.5.500h9v9h-9z" /></svg></CaptionButton>
        <CaptionButton aria-label="关闭"><svg width="11" height="11" stroke="#000"><path d="m.5.500 10 10m0-10-10 10" /></svg></CaptionButton>
      </TitleBar>
      <MenuBar>
        <button>系统管理</button>
        <button>视图(<u>V</u>)</button>
        <button>窗口管理(<u>W</u>)</button>
        <button>帮助(<u>H</u>)</button>
      </MenuBar>
      <ToolBar>
        <Grip />
        <NavGroup>
          <NavButton aria-label="首条"><Nav flip bar /></NavButton>
          <NavButton aria-label="上一条"><Nav flip /></NavButton>
          <NavButton aria-label="下一条"><Nav /></NavButton>
          <NavButton aria-label="末条"><Nav bar /></NavButton>
        </NavGroup>
        {tools.map((t) => (
          <React.Fragment key={t.text + t.w}>
            {t.sep && <ToolSep />}
            <ToolButton $w={t.w}>
              {t.icon}
              <span>{t.text}{t.key && <>(<u>{t.key}</u>)</>}</span>
              {t.drop && <DropArrow />}
            </ToolButton>
          </React.Fragment>
        ))}
        <Overflow aria-label="更多按钮">
          <svg width="7" height="8" fill="#000"><path d="M1 0h5v1H1zM0 3h7L3.500 7z" /></svg>
        </Overflow>
      </ToolBar>
      <Body>
        <Sidebar>
          <SideTitle>模块菜单<SideDots /><Pin /></SideTitle>
          <SearchRow>
            <SearchBox><input type="text" aria-label="搜索模块" /><Magnifier /></SearchBox>
            <UserButton aria-label="用户"><UserIcon /></UserButton>
          </SearchRow>
          <TreeBox>
            <TreeArea>
              <Tree>
                <TreeRoot>
                  <Expander aria-label="收起"><svg width="5" height="5" stroke="#2b4f9e"><path d="M0 2.500h5" /></svg></Expander>
                  <RootLabel><FolderIcon />成品管理</RootLabel>
                  <Branch>
                    {leaves.map((t, i) => (
                      <Leaf key={i}>
                        {i === 4 && (
                          <Expander aria-label="展开"><svg width="5" height="5" stroke="#2b4f9e"><path d="M0 2.500h5M2.500 0v5" /></svg></Expander>
                        )}
                        <ModuleIcon />{t}
                      </Leaf>
                    ))}
                  </Branch>
                </TreeRoot>
              </Tree>
              <WinScrollV>
                <Chevron d="m1 7 4-4 4 4" />
                <WinThumbV />
                <Chevron d="m1 3 4 4 4-4" />
              </WinScrollV>
            </TreeArea>
            <WinScrollH>
              <Chevron d="m7 1-4 4 4 4" />
              <WinThumbH />
              <Chevron d="m3 1 4 4-4 4" />
            </WinScrollH>
          </TreeBox>
        </Sidebar>
        <Main>
          <DocTabs>
            <DocTab $w={112}>系统主菜单</DocTab>
            <DocTab $w={161} $active>
              送货单-[EA256164]
              <svg width="9" height="9" stroke="#fff" strokeWidth="1.500"><path d="m.5.500 8 8m0-8-8 8" /></svg>
            </DocTab>
            <TabMenuButton aria-label="窗口列表"><Arrow $dir="down" $s={4} $c="#000" /></TabMenuButton>
          </DocTabs>
          <PageTabs>
            <PageTab $active>成品送货单</PageTab>
            <PageTab>报关管理</PageTab>
            <PageTab>报表查询</PageTab>
          </PageTabs>
          <Frame>
            <Page>
              <PageRow>
                <Content>
                  <OrderForm />
                  <GridPane>
                    <TableArea>
                      <DataGrid cols={orderCols} rows={orderRows} headH={34} label="送货明细" />
                    </TableArea>
                    <Summary>
                      <Hint>
                        <span>提示：双击相应“订单编号”栏或“备品”栏，可以查看订单送货信息     计价数= 每包数 * 包数+散数       总数= 计价数+备品</span>
                      </Hint>
                      <Sum $w={50} />
                      <Sum $w={50}>21643</Sum>
                      <Sum $w={68}>21643</Sum>
                    </Summary>
                    <ScrollH>
                      <Arrow $dir="left" />
                      <ThumbH $w="335px"><Ridges /></ThumbH>
                    </ScrollH>
                  </GridPane>
                  <GridPane $fill>
                    <DataGrid cols={stockCols} rows={stockRows} headH={21} label="出库明细" />
                  </GridPane>
                </Content>
                <ScrollV>
                  <Arrow $dir="up" />
                  <ThumbV><Ridges vertical /></ThumbV>
                  <Arrow $dir="down" />
                </ScrollV>
              </PageRow>
              <PageScroll>
                <Arrow $dir="left" />
                <ThumbH $w="80%"><Ridges /></ThumbH>
                <Arrow $dir="right" />
              </PageScroll>
            </Page>
          </Frame>
        </Main>
      </Body>
    </Window>
  );
}
